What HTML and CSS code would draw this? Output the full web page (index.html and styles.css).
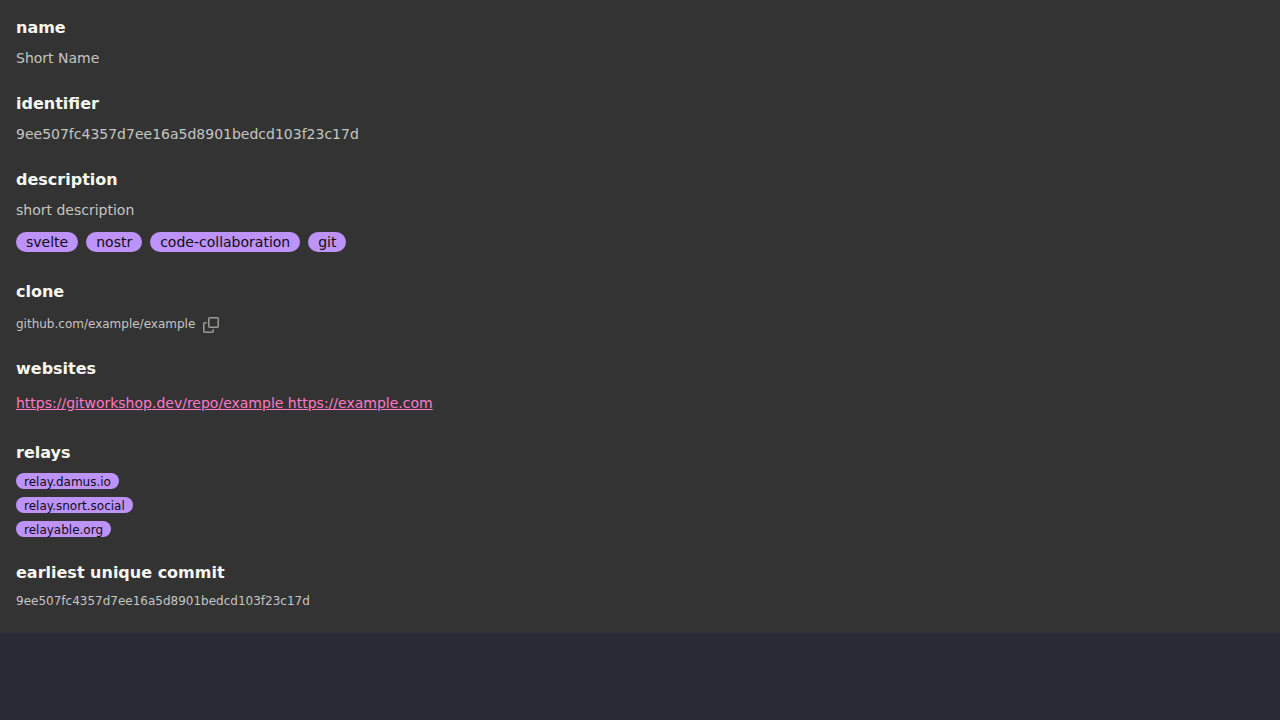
FILE: index.html
```html
<!DOCTYPE html>
<html lang="en">
<head>
<meta charset="utf-8">
<meta name="viewport" content="width=device-width, initial-scale=1">
<title>Repository details</title>
<link rel="stylesheet" href="styles.css">
</head>
<body>
<main class="details">
  <section>
    <h4 class="title">name</h4>
    <p class="text">Short Name</p>
  </section>
  <section>
    <h4 class="title">identifier</h4>
    <p class="text">9ee507fc4357d7ee16a5d8901bedcd103f23c17d</p>
  </section>
  <section>
    <h4 class="title">description</h4>
    <p class="text">short description</p>
    <div class="tags">
      <span class="badge">svelte</span>
      <span class="badge">nostr</span>
      <span class="badge">code-collaboration</span>
      <span class="badge">git</span>
    </div>
  </section>
  <section>
    <h4 class="title">clone</h4>
    <button class="copy" type="button">
      <span>github.com/example/example</span>
      <svg class="copy-icon" viewBox="0 0 16 16" aria-hidden="true"><path fill-rule="evenodd" d="M14.25 0A1.75 1.75 0 0 1 16 1.75v7.5A1.75 1.75 0 0 1 14.25 11h-7.5A1.75 1.75 0 0 1 5 9.25v-7.5C5 .784 5.784 0 6.75 0ZM6.5 1.75v7.5c0 .138.112.25.25.25h7.5a.25.25 0 0 0 .25-.25v-7.5a.25.25 0 0 0-.25-.25h-7.5a.25.25 0 0 0-.25.25ZM0 6.75C0 5.784.784 5 1.75 5h1.5a.75.75 0 0 1 0 1.5h-1.5a.25.25 0 0 0-.25.25v7.5c0 .138.112.25.25.25h7.5a.25.25 0 0 0 .25-.25v-1.5a.75.75 0 0 1 1.5 0v1.5A1.75 1.75 0 0 1 9.25 16h-7.5A1.75 1.75 0 0 1 0 14.25Z"/></svg>
    </button>
  </section>
  <section>
    <h4 class="title">websites</h4>
    <p class="links"><a class="link" href="https://gitworkshop.dev/repo/example">https://gitworkshop.dev/repo/example </a><a class="link" href="https://example.com">https://example.com</a></p>
  </section>
  <section>
    <h4 class="title">relays</h4>
    <ul class="relays">
      <li class="badge badge-small">relay.damus.io</li>
      <li class="badge badge-small">relay.snort.social</li>
      <li class="badge badge-small">relayable.org</li>
    </ul>
  </section>
  <section>
    <h4 class="title">earliest unique commit</h4>
    <p class="commit">9ee507fc4357d7ee16a5d8901bedcd103f23c17d</p>
  </section>
</main>
</body>
</html>
```

FILE: styles.css
```css
* {
  box-sizing: border-box;
}

body {
  margin: 0;
  background: #282a36;
  color: #c6c6c2;
  font-family: "DejaVu Sans", sans-serif;
  font-size: 14px;
  line-height: 20px;
}

.details {
  display: flex;
  flex-direction: column;
  gap: 20px;
  padding: 16px 16px 20px;
  background: #333333;
}

.title {
  margin: 0;
  color: #f8f8f2;
  font-size: 16px;
  line-height: 24px;
}

.text {
  margin: 0;
  padding: 8px 0 4px;
}

.tags {
  display: flex;
  flex-wrap: wrap;
  gap: 8px;
  padding: 8px 0;
}

.badge {
  padding: 0 10px;
  border-radius: 10px;
  background: #bd93f9;
  color: #100c15;
}

.copy {
  display: flex;
  align-items: flex-start;
  gap: 8px;
  margin-top: 12px;
  padding: 0 0 4px;
  border: 0;
  background: none;
  color: inherit;
  font: inherit;
  font-size: 12px;
  line-height: 16px;
  cursor: pointer;
}

.copy-icon {
  width: 16px;
  height: 16px;
  margin-top: 1px;
  fill: currentColor;
  opacity: 0.7;
}

.links {
  margin: 0;
  padding: 12px 0 8px;
}

.link {
  color: #ff79c6;
}

.relays {
  display: flex;
  flex-direction: column;
  align-items: flex-start;
  gap: 8px;
  margin: 0;
  padding: 8px 0 4px;
  list-style: none;
}

.badge-small {
  height: 16px;
  padding: 0 8px;
  border-radius: 8px;
  font-size: 12px;
  line-height: 18px;
}

.commit {
  margin: 0;
  padding: 8px 0 4px;
  font-size: 12px;
  line-height: 16px;
}
```
